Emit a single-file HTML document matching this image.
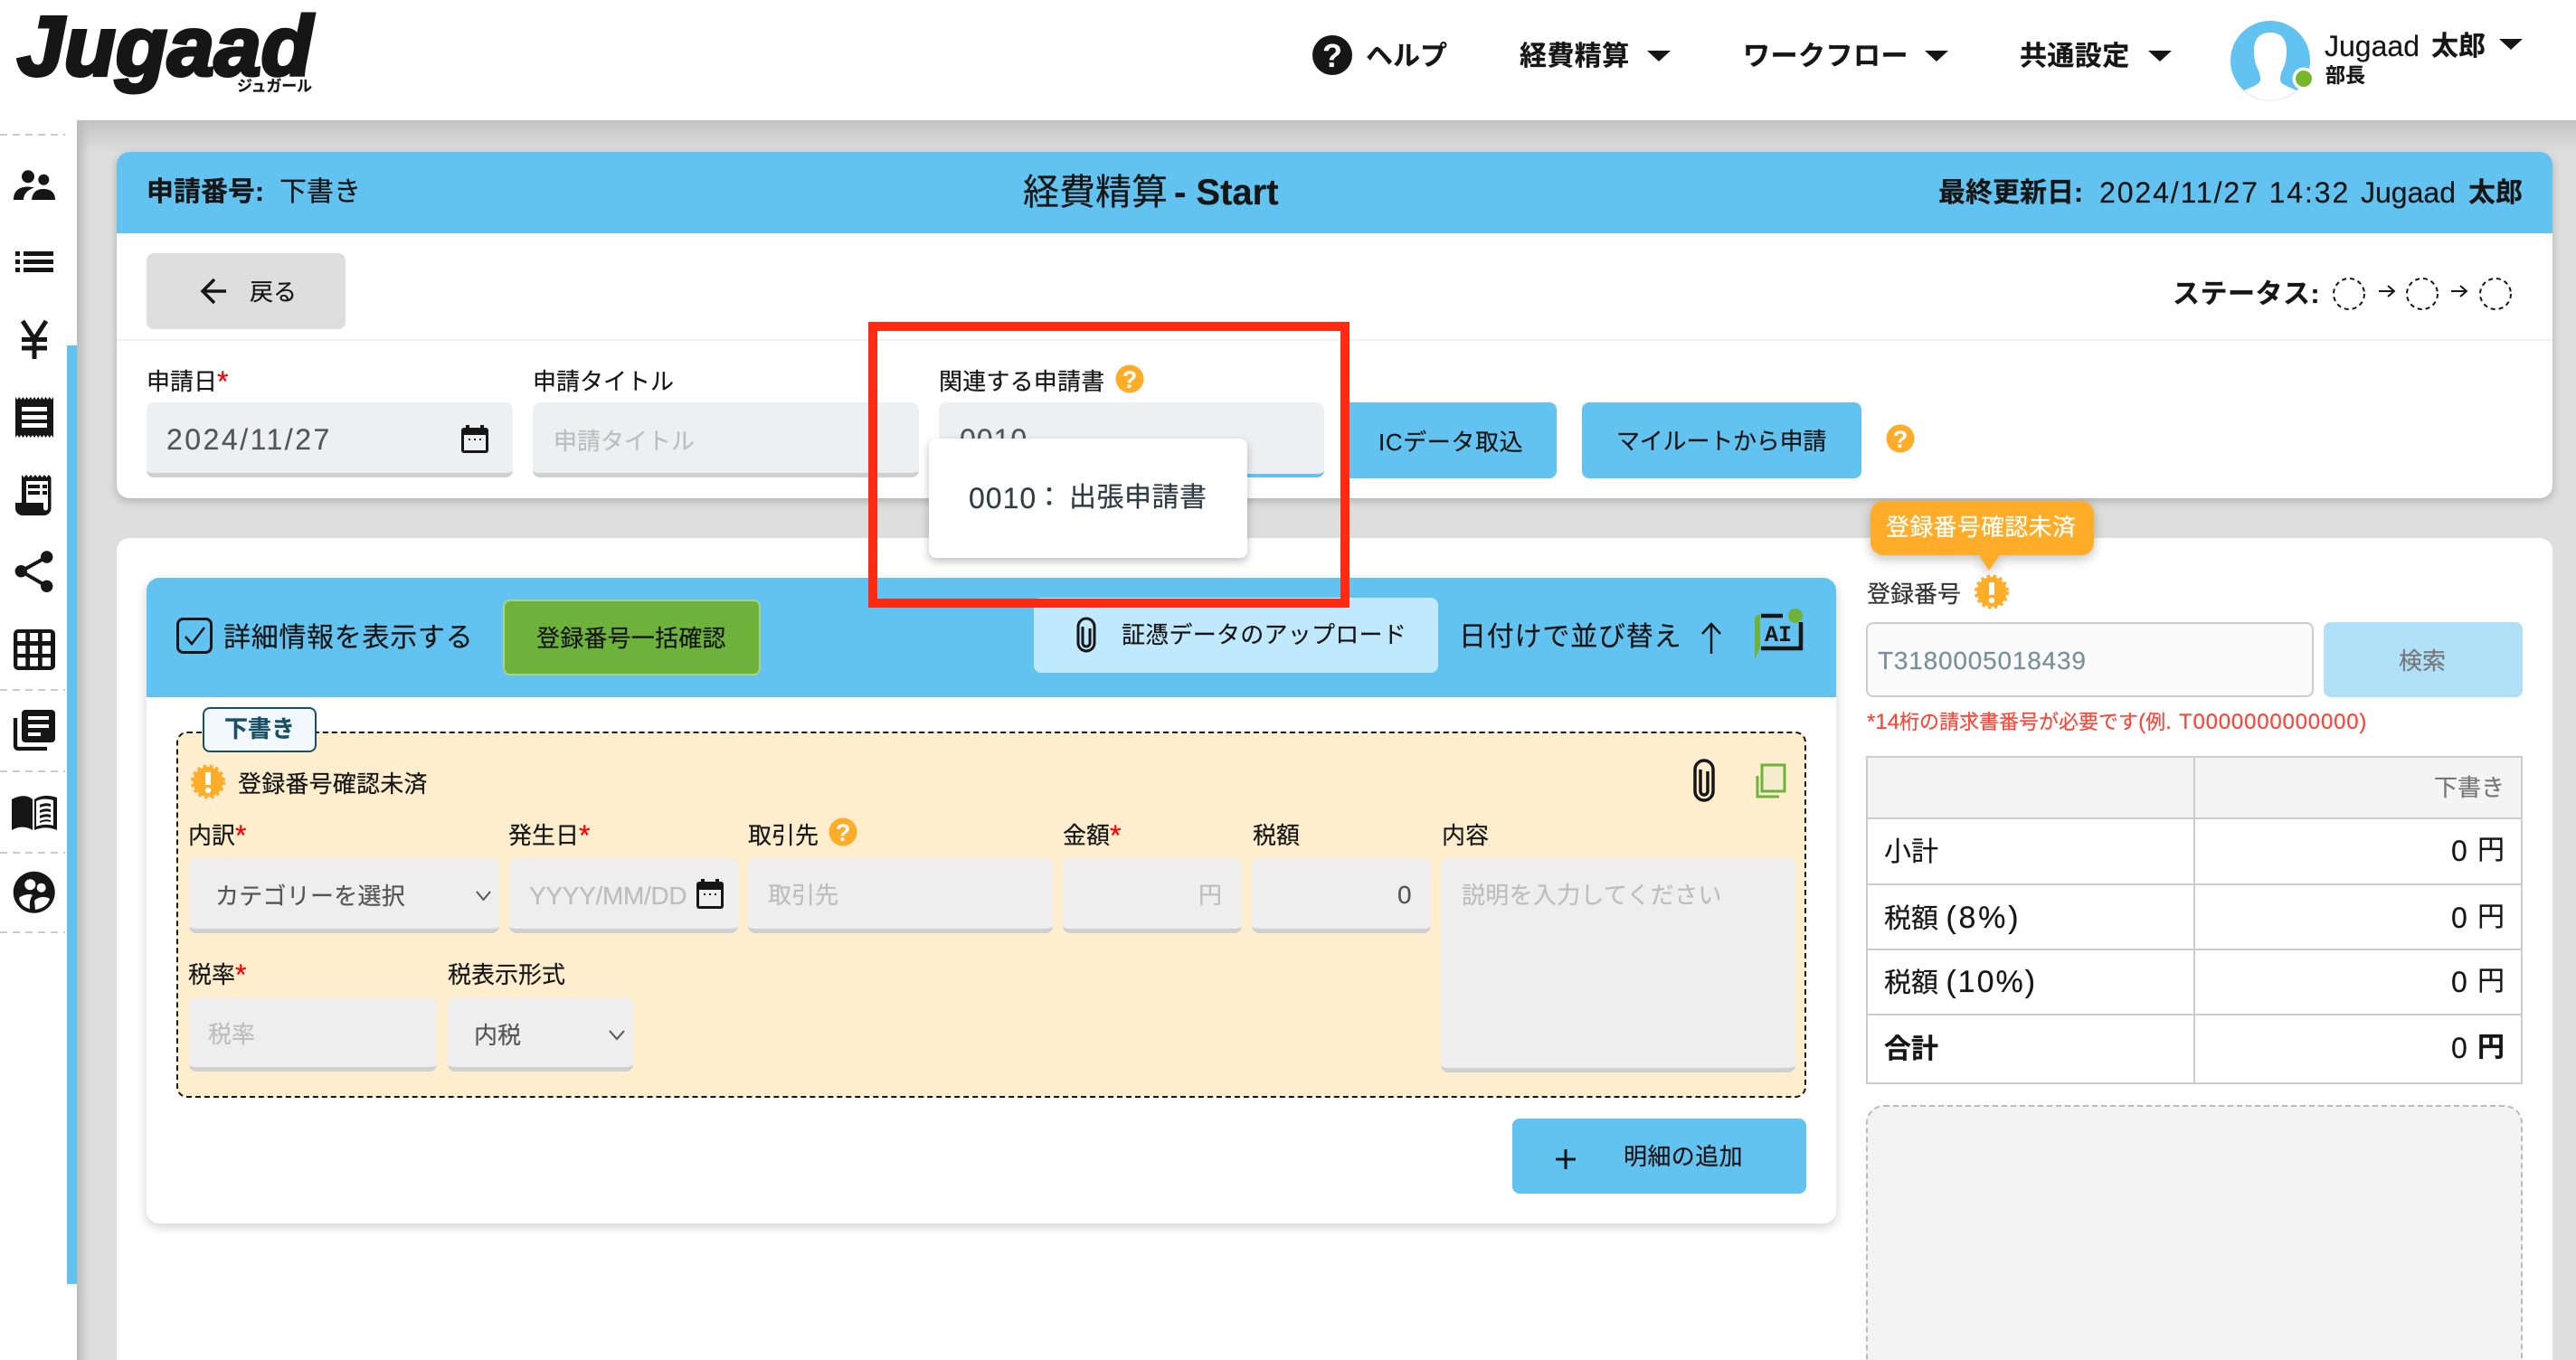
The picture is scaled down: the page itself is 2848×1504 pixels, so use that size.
<!DOCTYPE html>
<html lang="ja"><head><meta charset="utf-8"><title>経費精算</title>
<style>
html,body{margin:0;padding:0;background:#fff}
#p{position:relative;width:2848px;height:1504px;overflow:hidden;background:#dedede;font-family:"Liberation Sans","Noto Sans CJK JP",sans-serif;color:#161616}
.b{position:absolute;box-sizing:border-box}
.t{position:absolute;white-space:nowrap;line-height:1;font-size:26px;-webkit-text-stroke:.2px currentColor}
.r{color:#f00;font-size:32px;line-height:0;vertical-align:-2px}
.bd{font-weight:700}
.in{position:absolute;box-sizing:border-box;border-bottom:5px solid #d0d0d0;border-radius:8px}
.ph{color:#bdbdbd}
svg{position:absolute;left:0;top:0}
</style></head><body><div id="p">

<div class="b" style="left:85px;top:133px;width:2763px;height:36px;background:linear-gradient(#c3c3c3,#dedede)"></div>
<div class="b" style="left:85px;top:133px;width:14px;height:1371px;background:linear-gradient(90deg,#bcbcbc,rgba(222,222,222,0))"></div>
<div class="b" style="left:0;top:0;width:2848px;height:133px;background:#fff"></div>
<div class="b" style="left:0;top:133px;width:85px;height:1371px;background:#fff"></div>
<div class="b" style="left:74px;top:382px;width:11px;height:1038px;background:#62c2f0"></div>

<div class="t" style="left:19px;top:5px;font-size:93px;font-weight:700;font-style:italic;letter-spacing:.2px;-webkit-text-stroke:4px #161616">Jugaad</div>
<div class="t bd" style="left:262px;top:87px;font-size:17px;letter-spacing:-.2px">ジュガール</div>

<div class="t bd" style="left:1510px;top:48px;font-size:30px">ヘルプ</div>
<div class="t bd" style="left:1680px;top:48px;font-size:30px;letter-spacing:.4px">経費精算</div>
<div class="t bd" style="left:1927px;top:48px;font-size:30px;letter-spacing:.5px">ワークフロー</div>
<div class="t bd" style="left:2233px;top:48px;font-size:30px;letter-spacing:.4px">共通設定</div>
<div class="t" style="left:2570px;top:35px;font-size:32px">Jugaad</div>
<div class="t bd" style="left:2688px;top:37px;font-size:30px">太郎</div>
<div class="t bd" style="left:2571px;top:73px;font-size:22px">部長</div>

<!-- card 1 -->
<div class="b" style="left:129px;top:168px;width:2693px;height:383px;background:#fff;border-radius:14px;box-shadow:0 3px 10px rgba(0,0,0,.22)"></div>
<div class="b" style="left:129px;top:168px;width:2693px;height:90px;background:#62c2f0;border-radius:14px 14px 0 0"></div>
<div class="t bd" style="left:162px;top:198px;font-size:30px">申請番号:</div>
<div class="t" style="left:309px;top:198px;font-size:30px">下書き</div>
<div class="t" style="left:1131px;top:193px;font-size:40px">経費精算</div>
<div class="t bd" style="left:1298px;top:193px;font-size:40px">- Start</div>
<div class="t bd" style="left:2143px;top:199px;font-size:30px">最終更新日:</div>
<div class="t" style="left:2321px;top:197px;font-size:32px;letter-spacing:1.9px">2024/11/27 14:32</div>
<div class="t" style="left:2610px;top:197px;font-size:32px">Jugaad</div>
<div class="t bd" style="left:2729px;top:199px;font-size:30px">太郎</div>

<div class="b" style="left:162px;top:280px;width:220px;height:84px;background:#dedede;border-radius:8px"></div>
<div class="t" style="left:276px;top:310px">戻る</div>
<div class="t bd" style="left:2402px;top:311px;font-size:30px;letter-spacing:.5px">ステータス:</div>
<div class="b" style="left:129px;top:375px;width:2693px;height:2px;background:#f1f1f1"></div>

<div class="t" style="left:162px;top:409px">申請日<span class="r">*</span></div>
<div class="in" style="left:162px;top:445px;width:405px;height:83px;background:#ecf0f3"></div>
<div class="t" style="left:184px;top:470px;font-size:32px;letter-spacing:2.5px;color:#555">2024/11/27</div>
<div class="t" style="left:589px;top:409px">申請タイトル</div>
<div class="in" style="left:589px;top:445px;width:427px;height:83px;background:#ecf0f3"></div>
<div class="t ph" style="left:612px;top:475px">申請タイトル</div>
<div class="t" style="left:1038px;top:409px;letter-spacing:.2px">関連する申請書</div>
<div class="in" style="left:1038px;top:445px;width:426px;height:83px;background:#ecf0f3;border-bottom:4px solid #62c2f0"></div>
<div class="t" style="left:1061px;top:470px;font-size:32px;letter-spacing:1px;color:#555">0010</div>

<div class="b" style="left:1492px;top:445px;width:229px;height:84px;background:#62c2f0;border-radius:0 8px 8px 0"></div>
<div class="t" style="left:1524px;top:476px;letter-spacing:.6px">ICデータ取込</div>
<div class="b" style="left:1749px;top:445px;width:309px;height:84px;background:#62c2f0;border-radius:8px"></div>
<div class="t" style="left:1787px;top:475px;letter-spacing:-.2px">マイルートから申請</div>

<!-- card 2 -->
<div class="b" style="left:129px;top:595px;width:2693px;height:950px;background:#fff;border-radius:14px"></div>

<div class="b" style="left:162px;top:639px;width:1868px;height:714px;background:#fff;border-radius:14px;box-shadow:0 4px 12px rgba(0,0,0,.18)"></div>
<div class="b" style="left:162px;top:639px;width:1868px;height:132px;background:#62c2f0;border-radius:14px 14px 0 0"></div>
<div class="t" style="left:247px;top:691px;font-size:30px;letter-spacing:.7px">詳細情報を表示する</div>
<div class="b" style="left:556px;top:663px;width:285px;height:84px;background:#6db33b;border:2px solid #a9d67c;border-radius:8px"></div>
<div class="t" style="left:593px;top:693px;letter-spacing:.2px">登録番号一括確認</div>
<div class="b" style="left:1143px;top:661px;width:447px;height:83px;background:#c0e9fd;border-radius:8px"></div>
<div class="t" style="left:1240px;top:689px;letter-spacing:.25px">証憑データのアップロード</div>
<div class="t" style="left:1613px;top:690px;font-size:30px;letter-spacing:.8px">日付けで並び替え</div>

<div class="b" style="left:195px;top:809px;width:1802px;height:405px;background:#feeecd;border:2px dashed #161616;border-radius:12px"></div>
<div class="b" style="left:224px;top:782px;width:126px;height:50px;background:#f2f9fe;border:2px solid #1a4f66;border-radius:8px"></div>
<div class="t bd" style="left:248px;top:793px;color:#1a4f66">下書き</div>
<div class="t" style="left:263px;top:854px;letter-spacing:.2px">登録番号確認未済</div>

<div class="t" style="left:208px;top:911px">内訳<span class="r">*</span></div>
<div class="t" style="left:562px;top:911px">発生日<span class="r">*</span></div>
<div class="t" style="left:827px;top:911px">取引先</div>
<div class="t" style="left:1175px;top:911px">金額<span class="r">*</span></div>
<div class="t" style="left:1385px;top:911px">税額</div>
<div class="t" style="left:1594px;top:911px">内容</div>

<div class="in" style="left:209px;top:949px;width:343px;height:83px;background:#eee"></div>
<div class="t" style="left:238px;top:978px;color:#555;letter-spacing:.25px">カテゴリーを選択</div>
<div class="in" style="left:563px;top:949px;width:253px;height:83px;background:#eee"></div>
<div class="t ph" style="left:585px;top:977px;font-size:28px;letter-spacing:-.3px">YYYY/MM/DD</div>
<div class="in" style="left:827px;top:949px;width:337px;height:83px;background:#eee"></div>
<div class="t ph" style="left:849px;top:977px">取引先</div>
<div class="in" style="left:1175px;top:949px;width:198px;height:83px;background:#eee"></div>
<div class="t ph" style="left:1325px;top:977px">円</div>
<div class="in" style="left:1384px;top:949px;width:198px;height:83px;background:#eee"></div>
<div class="t" style="left:1545px;top:976px;color:#555;font-size:28px">0</div>
<div class="in" style="left:1593px;top:949px;width:392px;height:237px;background:#eee"></div>
<div class="t ph" style="left:1616px;top:977px;letter-spacing:.3px">説明を入力してください</div>

<div class="t" style="left:208px;top:1065px">税率<span class="r">*</span></div>
<div class="t" style="left:495px;top:1065px">税表示形式</div>
<div class="in" style="left:209px;top:1103px;width:274px;height:82px;background:#eee"></div>
<div class="t ph" style="left:230px;top:1131px">税率</div>
<div class="in" style="left:495px;top:1103px;width:205px;height:82px;background:#eee"></div>
<div class="t" style="left:524px;top:1132px;color:#555">内税</div>

<div class="b" style="left:1672px;top:1237px;width:325px;height:83px;background:#62c2f0;border-radius:8px"></div>
<div class="t" style="left:1795px;top:1266px;letter-spacing:.4px">明細の追加</div>

<!-- right panel -->
<div class="t" style="left:2064px;top:644px;color:#333">登録番号</div>
<div class="b" style="left:2063px;top:688px;width:495px;height:83px;background:#fafafa;border:2px solid #ccc;border-radius:8px"></div>
<div class="t" style="left:2076px;top:717px;font-size:28px;letter-spacing:.8px;color:#78909c">T3180005018439</div>
<div class="b" style="left:2569px;top:688px;width:220px;height:83px;background:#b0e0f8;border-radius:8px"></div>
<div class="t" style="left:2652px;top:718px;color:#777">検索</div>
<div class="t" style="left:2064px;top:787px;font-size:22px;color:#ff4438"><span style="font-size:24px">*14</span>桁の請求書番号が必要です<span style="font-size:24px">(</span>例<span style="font-size:24px;letter-spacing:.8px">. T0000000000000)</span></div>

<div class="b" style="left:2063px;top:836px;width:726px;height:363px;background:#fff;border:2px solid #ccc"></div>
<div class="b" style="left:2065px;top:838px;width:722px;height:67px;background:#f4f4f4"></div>
<div class="b" style="left:2065px;top:904px;width:722px;height:2px;background:#ccc"></div>
<div class="b" style="left:2065px;top:977px;width:722px;height:2px;background:#ccc"></div>
<div class="b" style="left:2065px;top:1049px;width:722px;height:2px;background:#ccc"></div>
<div class="b" style="left:2065px;top:1121px;width:722px;height:2px;background:#ccc"></div>
<div class="b" style="left:2425px;top:838px;width:2px;height:360px;background:#ccc"></div>
<div class="t" style="left:2691px;top:858px;color:#777">下書き</div>
<div class="t" style="left:2083px;top:928px;font-size:30px">小計</div>
<div class="t" style="left:2710px;top:925px;font-size:32px">0</div><div class="t" style="left:2739px;top:926px;font-size:30px">円</div>
<div class="t" style="left:2083px;top:998px;font-size:30px">税額 <span style="font-size:34px;letter-spacing:2.8px">(8%)</span></div>
<div class="t" style="left:2710px;top:999px;font-size:32px">0</div><div class="t" style="left:2739px;top:1000px;font-size:30px">円</div>
<div class="t" style="left:2083px;top:1069px;font-size:30px">税額 <span style="font-size:34px;letter-spacing:2px">(10%)</span></div>
<div class="t" style="left:2710px;top:1070px;font-size:32px">0</div><div class="t" style="left:2739px;top:1071px;font-size:30px">円</div>
<div class="t bd" style="left:2083px;top:1146px;font-size:30px">合計</div>
<div class="t" style="left:2710px;top:1143px;font-size:32px">0</div><div class="t bd" style="left:2739px;top:1144px;font-size:30px">円</div>

<div class="b" style="left:2063px;top:1222px;width:726px;height:340px;background:#f3f3f3;border:2px dashed #bbb;border-radius:20px"></div>

<!-- icons -->
<svg width="2848" height="1504" viewBox="0 0 2848 1504" fill="none">
<!-- sidebar dashes -->
<g stroke="#ccc" stroke-width="2" stroke-dasharray="8 6"><path d="M0 149H72M0 763H72M0 853H72M0 943H72M0 1031H72"/></g>
<!-- people -->
<g fill="#161616">
<circle cx="31" cy="195.3" r="7"/><circle cx="48.3" cy="198.7" r="6"/>
<path d="M15 221C15 211 21 206.5 31 206.5C34 206.5 36 207 38 207.5C30 210 26 215 26 221Z"/>
<path d="M35 221C36 212 41 209 48 209C55 209 61 212 61 221Z"/>
<!-- list -->
<path d="M17 278h5v5h-5zM26 278h33v5H26zM17 287h5v5h-5zM26 287h33v5H26zM17 296h5v5h-5zM26 296h33v5H26z"/>
<!-- receipt -->
<path fill-rule="evenodd" d="M17 439l2.1 3 2.1-3 2.1 3 2.1-3 2.1 3 2.1-3 2.1 3 2.1-3 2.1 3 2.1-3 2.1 3 2.1-3 2.1 3 2.1-3 2.1 3 2.1-3 2.1 3 2.1-3 2.1 3 2.1-3V484l-2.1-3-2.1 3-2.1-3-2.1 3-2.1-3-2.1 3-2.1-3-2.1 3-2.1-3-2.1 3-2.1-3-2.1 3-2.1-3-2.1 3-2.1-3-2.1 3-2.1-3-2.1 3-2.1-3-2.1 3ZM24 450v5h28v-5ZM24 459v5h28v-5ZM24 468v5h28v-5Z"/>
<!-- receipt 2 -->
<path fill-rule="evenodd" d="M24 525l2.5 3 2.5-3 2.5 3 2.5-3 2.5 3 2.5-3 2.5 3 2.5-3 2.5 3 2.5-3 2.5 3 2.5-3 2.5 3V562a8 8 0 0 1-8 8H25a8 8 0 0 1-8-8V556h7ZM29 532V556H48V562a2.5 2.5 0 0 0 5 0V532Z"/>
<path d="M31 536h13v4H31zM47 536h5v4h-5zM31 543h13v4H31zM47 543h5v4h-5z"/>
<!-- share -->
<circle cx="23.3" cy="631.7" r="6.7"/><circle cx="51.7" cy="616" r="6.7"/><circle cx="51.7" cy="648.3" r="6.7"/>
</g>
<path d="M23.3 631.7L51.7 616M23.3 631.7L51.7 648.3" stroke="#161616" stroke-width="4"/>
<!-- yen -->
<path d="M25 355L38 375L51 355M38 375V397M24 375.5H52M24 385H52" stroke="#161616" stroke-width="5"/>
<!-- grid -->
<rect x="15" y="696" width="46" height="45" rx="5" fill="#161616"/>
<path fill="#fff" d="M19.3 700h9v9h-9zM33 700h9v9h-9zM46.700 700h9.300v9h-9.300zM19.300 714h9v9h-9zM33 714h9v9h-9zM46.700 714h9.300v9h-9.300zM19.300 727.300h9v9.400h-9zM33 727.300h9v9.400h-9zM46.700 727.300h9.300v9.400h-9.300z"/>
<!-- docs -->
<rect x="24" y="785" width="37" height="36" rx="4" fill="#161616"/>
<path fill="#fff" d="M31 792h23v4H31zM31 801h23v4H31zM31 810h14v4H31z"/>
<path d="M17 794V825a3 3 0 0 0 3 3H52" stroke="#161616" stroke-width="4.300"/>
<!-- book -->
<path fill="#161616" d="M13 884C22 879 31 879 36 884V918C28 913 20 914 13 918Z"/>
<path fill="#161616" d="M38 884C45 879 54 879 63 882V918C54 914 45 915 38 918Z"/>
<path fill="#fff" d="M40 886C45 883 52 883 59 885V913C52 911 45 912 40 914Z"/>
<path fill="#161616" d="M44 890Q50 887 56 889V892Q50 890 44 893ZM44 896Q50 893 56 895V898Q50 896 44 899ZM44 902Q50 899 56 901V904Q50 902 44 905ZM44 908Q50 905 56 907V909Q50 907 44 910Z"/>
<!-- palette -->
<circle cx="37.700" cy="986.700" r="23" fill="#161616"/>
<g fill="#fff"><circle cx="33.300" cy="978.300" r="6"/><circle cx="45.700" cy="981.700" r="5"/>
<path d="M21 993Q26 989 33 989Q35 989 36 990Q32 995 33 1005Q23 1003 21 993Z"/><path d="M38 996Q42 992 48 992Q52 992 55 994Q52 1004 39 1006Z"/></g>

<!-- nav help -->
<circle cx="1473" cy="61" r="22" fill="#161616"/>
<text x="1473" y="74" font-family="Liberation Sans" font-weight="700" font-size="36" fill="#fff" text-anchor="middle">?</text>
<path fill="#161616" d="M1821 56H1847L1834 68ZM2128 56H2154L2141 68ZM2375 56H2401L2388 68ZM2763 43H2789L2776 55Z"/>
<!-- avatar -->
<ellipse cx="2510" cy="80" rx="40" ry="32" fill="#000" opacity=".05"/>
<circle cx="2510" cy="67" r="44" fill="#62c2f0"/>
<path fill="#fff" d="M2510 36C2497 36 2492 44 2492 56C2492 64 2493 70 2496 76C2498 80 2499 84 2499 88C2499 93 2492 95 2481 100A44 44 0 0 0 2539 100C2528 95 2521 93 2521 88C2521 84 2522 80 2524 76C2527 70 2528 64 2528 56C2528 44 2523 36 2510 36Z"/>
<circle cx="2547" cy="87" r="12.500" fill="#fff"/><circle cx="2547" cy="87" r="9" fill="#76b82a"/>
<!-- back arrow -->
<path d="M250 322H226M237 309L224 322L237 335" stroke="#161616" stroke-width="3.500"/>
<!-- status -->
<g stroke="#161616" stroke-width="2" stroke-dasharray="5 4"><circle cx="2597" cy="325" r="17"/><circle cx="2678" cy="325" r="17"/><circle cx="2759" cy="325" r="17"/></g>
<path d="M2630 322H2646M2640 316L2647 322L2640 328M2710 322H2726M2720 316L2727 322L2720 328" stroke="#161616" stroke-width="2"/>
<!-- calendar -->
<g fill="#161616"><path d="M515 470h4v5h-4zM531 470h4v5h-4z"/><rect x="510" y="473" width="30" height="28" rx="3"/></g>
<rect x="513" y="481" width="24" height="17" fill="#ecf0f3"/><path fill="#161616" d="M518 485h2v2h-2zM524 485h2v2h-2zM530 485h2v2h-2z"/>
<g fill="#161616"><path d="M775 972h4v5h-4zM791 972h4v5h-4z"/><rect x="770" y="975" width="30" height="30" rx="3"/></g>
<rect x="773" y="984" width="24" height="18" fill="#eee"/><path fill="#161616" d="M778 988h2v2h-2zM784 988h2v2h-2zM790 988h2v2h-2z"/>
<!-- help orange -->
<g fill="#ffad29"><circle cx="1249" cy="419" r="15.500"/><circle cx="2101" cy="485" r="15.500"/><circle cx="932" cy="920" r="15.500"/></g>
<g font-family="Liberation Sans" font-weight="700" font-size="27" fill="#fff" text-anchor="middle"><text x="1249" y="429">?</text><text x="2101" y="495">?</text><text x="932" y="930">?</text></g>
<!-- checkbox -->
<rect x="196.500" y="684.500" width="37" height="37" rx="6" stroke="#161616" stroke-width="3"/>
<path d="M205 704L212 712L226 694" stroke="#161616" stroke-width="2.500"/>
<!-- clips -->
<g stroke="#161616" stroke-width="3"><path d="M1192 695V711A9 9 0 0 0 1210 711V693A9 9 0 0 0 1192 693V695"/><path d="M1197 693V711A4 4 0 0 0 1205 711V695"/></g>
<g stroke="#161616" stroke-width="3.500"><path d="M1874 851V875A10 10 0 0 0 1894 875V851A10 10 0 0 0 1874 851"/><path d="M1880 851V875A4 4 0 0 0 1888 875V853"/></g>
<!-- up arrow -->
<path d="M1892 723V690M1882 701L1892 690L1902 701" stroke="#161616" stroke-width="2.500"/>
<!-- AI -->
<path fill="#6fb23a" d="M1940 682L1946 679V716L1940 729Z"/>
<circle cx="1985" cy="681" r="8" fill="#6fb23a"/>
<path d="M1947 681H1971M1947 717H1991V688" stroke="#161616" stroke-width="4.500"/>
<text x="1951" y="709" font-family="Liberation Mono" font-weight="700" font-size="25" fill="#161616">AI</text>
<!-- bursts -->
<circle cx="230" cy="864.500" r="16.500" fill="#ffad29"/><circle cx="230" cy="864.500" r="17.500" stroke="#ffad29" stroke-width="3" stroke-dasharray="3.500 3.500"/>
<path d="M230 854V868" stroke="#fff" stroke-width="6"/><circle cx="230" cy="874" r="3.200" fill="#fff"/>
<circle cx="2202" cy="654.500" r="16.500" fill="#ffad29"/><circle cx="2202" cy="654.500" r="17.500" stroke="#ffad29" stroke-width="3" stroke-dasharray="3.500 3.500"/>
<path d="M2202 644V658" stroke="#fff" stroke-width="6"/><circle cx="2202" cy="664" r="3.200" fill="#fff"/>
<!-- copy -->
<path d="M1948 846H1973V875H1948Z" stroke="#6fb23a" stroke-width="3" fill="#f6edcf"/>
<path d="M1943 858V881H1967" stroke="#6fb23a" stroke-width="3"/>
<!-- chevrons -->
<path d="M527 986L534.500 995L542 986M674 1140L682 1149L690 1140" stroke="#555" stroke-width="2"/>
<!-- plus -->
<path d="M1731 1271V1293M1720 1282H1742" stroke="#161616" stroke-width="3"/>
</svg>

<!-- popup -->
<div class="b" style="left:1027px;top:485px;width:352px;height:132px;background:#fff;border-radius:8px;box-shadow:0 4px 10px rgba(0,0,0,.25)"></div>
<div class="t" style="left:1071px;top:535px;font-size:32px;letter-spacing:1px;color:#2f3d44">0010</div>
<div class="t" style="left:1145px;top:536px;font-size:30px;color:#2f3d44">：</div>
<div class="t" style="left:1182px;top:536px;font-size:30px;letter-spacing:.5px;color:#2f3d44">出張申請書</div>

<!-- tooltip -->
<svg width="2848" height="1504" viewBox="0 0 2848 1504" style="filter:drop-shadow(0 4px 6px rgba(0,0,0,.25))"><path fill="#ffad29" d="M2082 554H2301a14 14 0 0 1 14 14V600a14 14 0 0 1-14 14H2211L2199 631L2188 614H2082a14 14 0 0 1-14-14V568a14 14 0 0 1 14-14Z"/></svg>
<div class="t" style="left:2085px;top:570px;color:#fff;letter-spacing:.25px">登録番号確認未済</div>

<!-- red annotation -->
<div class="b" style="left:960px;top:356px;width:532px;height:316px;border:10px solid #ff2a12"></div>
</div></body></html>
